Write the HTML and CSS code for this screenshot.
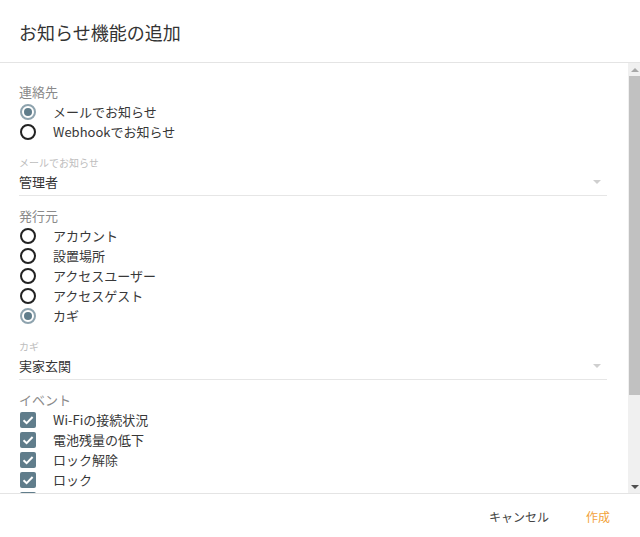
FILE: index.html
```html
<!DOCTYPE html>
<html lang="ja">
<head>
<meta charset="utf-8">
<title>お知らせ機能の追加</title>
<link rel="stylesheet" href="styles.css">
</head>
<body>
<div class="dialog">
  <header class="head">
    <h1 class="title">お知らせ機能の追加</h1>
  </header>
  <div class="main">
    <div class="content">
      <div class="group-label">連絡先</div>
      <label class="row"><span class="radio checked"></span><span class="text">メールでお知らせ</span></label>
      <label class="row"><span class="radio"></span><span class="text">Webhookでお知らせ</span></label>

      <div class="field">
        <div class="field-label">メールでお知らせ</div>
        <div class="field-value"><span>管理者</span><span class="caret"></span></div>
      </div>

      <div class="group-label">発行元</div>
      <label class="row"><span class="radio"></span><span class="text">アカウント</span></label>
      <label class="row"><span class="radio"></span><span class="text">設置場所</span></label>
      <label class="row"><span class="radio"></span><span class="text">アクセスユーザー</span></label>
      <label class="row"><span class="radio"></span><span class="text">アクセスゲスト</span></label>
      <label class="row"><span class="radio checked"></span><span class="text">カギ</span></label>

      <div class="field">
        <div class="field-label">カギ</div>
        <div class="field-value"><span>実家玄関</span><span class="caret"></span></div>
      </div>

      <div class="group-label">イベント</div>
      <label class="row"><span class="check"><svg viewBox="0 0 16 16" width="16" height="16"><polyline points="3.5,8.2 6.6,11.2 12.6,5" fill="none" stroke="#fff" stroke-width="2"/></svg></span><span class="text">Wi-Fiの接続状況</span></label>
      <label class="row"><span class="check"><svg viewBox="0 0 16 16" width="16" height="16"><polyline points="3.5,8.2 6.6,11.2 12.6,5" fill="none" stroke="#fff" stroke-width="2"/></svg></span><span class="text">電池残量の低下</span></label>
      <label class="row"><span class="check"><svg viewBox="0 0 16 16" width="16" height="16"><polyline points="3.5,8.2 6.6,11.2 12.6,5" fill="none" stroke="#fff" stroke-width="2"/></svg></span><span class="text">ロック解除</span></label>
      <label class="row"><span class="check"><svg viewBox="0 0 16 16" width="16" height="16"><polyline points="3.5,8.2 6.6,11.2 12.6,5" fill="none" stroke="#fff" stroke-width="2"/></svg></span><span class="text">ロック</span></label>
      <label class="row"><span class="check"><svg viewBox="0 0 16 16" width="16" height="16"><polyline points="3.5,8.2 6.6,11.2 12.6,5" fill="none" stroke="#fff" stroke-width="2"/></svg></span><span class="text">オートロック</span></label>
    </div>
    <div class="scrollbar">
      <div class="sb-btn"><span class="tri-up"></span></div>
      <div class="sb-thumb"></div>
      <div class="sb-track"></div>
      <div class="sb-btn"><span class="tri-down"></span></div>
    </div>
  </div>
  <footer class="foot">
    <button class="btn cancel">キャンセル</button>
    <button class="btn create">作成</button>
  </footer>
</div>
</body>
</html>
```
FILE: styles.css
```css
* { box-sizing: border-box; }
html, body { margin: 0; padding: 0; background: #fff; }
body {
  font-family: "Noto Sans CJK JP", Roboto, "Noto Sans", sans-serif;
  color: #333;
}
.dialog {
  width: 640px;
  height: 537px;
  display: flex;
  flex-direction: column;
  background: #fff;
}
.head {
  height: 63px;
  border-bottom: 1px solid #e4e4e4;
  padding: 0 19px;
  display: flex;
  align-items: center;
  flex: none;
}
.title {
  margin: 0;
  font-size: 18px;
  font-weight: 400;
  line-height: 24px;
  color: #333;
  position: relative;
  top: 1px;
}
.main {
  height: 431px;
  flex: none;
  display: flex;
  border-bottom: 1px solid #e4e4e4;
}
.content {
  flex: 1;
  overflow: hidden;
  padding: 19px 21px 0 19px;
}
.group-label {
  font-size: 13px;
  line-height: 20px;
  color: #8a8a8a;
}
.row {
  display: flex;
  align-items: center;
  height: 20px;
  font-size: 13px;
  color: #383838;
}
.row .text { line-height: 20px; }
.radio {
  width: 16px;
  height: 16px;
  border: 2px solid #222;
  border-radius: 50%;
  margin-left: 1px;
  margin-right: 17px;
  flex: none;
  display: flex;
  align-items: center;
  justify-content: center;
}
.radio.checked {
  border-color: #8ea3ae;
}
.radio.checked::after {
  content: "";
  width: 8px;
  height: 8px;
  border-radius: 50%;
  background: #607d8b;
}
.check {
  width: 16px;
  height: 16px;
  margin-left: 1px;
  margin-right: 17px;
  background: #607d8b;
  border-radius: 2px;
  flex: none;
  display: flex;
}
.field {
  margin-top: 14px;
  margin-bottom: 10px;
}
.field-label {
  font-size: 10px;
  line-height: 14px;
  color: #bdbdbd;
}
.field-value {
  margin-top: 2px;
  font-size: 13px;
  line-height: 20px;
  color: #333;
  padding-bottom: 3px;
  border-bottom: 1px solid #e6e6e6;
  display: flex;
  justify-content: space-between;
  align-items: center;
}
.caret {
  width: 0;
  height: 0;
  border-left: 4px solid transparent;
  border-right: 4px solid transparent;
  border-top: 4px solid #cfcfcf;
  margin-right: 6px;
}
.scrollbar {
  width: 12px;
  flex: none;
  background: #f0f0f0;
  display: flex;
  flex-direction: column;
}
.sb-btn {
  height: 13px;
  flex: none;
  display: flex;
  align-items: center;
  justify-content: center;
  padding-left: 2px;
}
.tri-up {
  width: 0; height: 0;
  border-left: 4px solid transparent;
  border-right: 4px solid transparent;
  border-bottom: 4px solid #a8a8a8;
}
.tri-down {
  width: 0; height: 0;
  border-left: 4px solid transparent;
  border-right: 4px solid transparent;
  border-top: 4px solid #505050;
}
.sb-thumb {
  height: 319px;
  margin-left: 1px;
  background: #c1c1c1;
  flex: none;
}
.sb-track { flex: 1; }
.foot {
  flex: 1;
  display: flex;
  justify-content: flex-end;
  align-items: center;
  gap: 5px;
  padding: 0 14px 0 0;
}
.btn {
  font-family: "Noto Sans CJK JP", Roboto, sans-serif;
  font-size: 12px;
  line-height: 20px;
  background: none;
  border: none;
  padding: 0 16px;
  cursor: pointer;
  position: relative;
  top: 1px;
}
.cancel { color: #444; }
.create { color: #f2a23a; }
```
